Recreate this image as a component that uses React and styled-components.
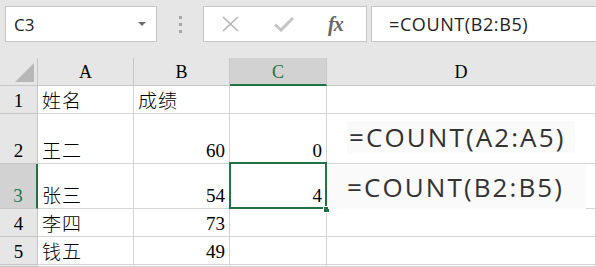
import { Fragment } from 'react';
import styled, { createGlobalStyle } from 'styled-components';

const GREEN = '#217346';

const Global = createGlobalStyle`
    html, body {
        margin: 0;
        padding: 0;
        background: #e6e6e6;
        overflow: hidden;
    }
    * {
        box-sizing: border-box;
    }
`;

const Page = styled.div`
    width: 596px;
    height: 267px;
    background: #e6e6e6;
    display: flex;
    flex-direction: column;
`;

const Toolbar = styled.div`
    height: 58px;
    display: flex;
    align-items: flex-start;
    padding: 6px 0 0 5px;
`;

const Box = styled.div`
    height: 36px;
    background: #fff;
    border: 1px solid #c6c6c6;
    display: flex;
    align-items: center;
`;

const NameBox = styled(Box)`
    width: 152px;
    padding: 0 0 0 8px;
    font-family: "Open Sans", "Liberation Sans", sans-serif;
    font-size: 17px;
    color: #222;
    justify-content: space-between;
`;

const DropArrow = styled.span`
    width: 0;
    height: 0;
    margin-right: 10px;
    border-left: 4px solid transparent;
    border-right: 4px solid transparent;
    border-top: 4px solid #6f6f6f;
`;

const Grip = styled.div`
    width: 46px;
    height: 36px;
    display: flex;
    flex-direction: column;
    align-items: center;
    justify-content: center;
    gap: 4px;
`;

const Dot = styled.span`
    width: 3px;
    height: 3px;
    background: #a6a6a6;
`;

const ButtonPanel = styled(Box)`
    width: 164px;
    padding-left: 18px;
    gap: 35px;
`;

const Fx = styled.span`
    font-family: "Liberation Serif", serif;
    font-style: italic;
    font-weight: bold;
    font-size: 20px;
    color: #666;
    margin-left: -1px;
    letter-spacing: -1px;
`;

const FormulaInput = styled(Box)`
    flex: 1;
    margin-left: 4px;
    border-right: none;
    padding-left: 17px;
    font-family: "Open Sans", "Liberation Sans", sans-serif;
    font-size: 18px;
    letter-spacing: 0.6px;
    color: #222;
`;

const Sheet = styled.div`
    position: relative;
    flex: 1;
    display: grid;
    grid-template-columns: 38px 96px 96px 97px 1fr;
    grid-template-rows: 28px 28px 50px 45px 28px 28px 1fr;
    overflow: hidden;
`;

const Corner = styled.div`
    border-right: 1px solid #c6c6c6;
    border-bottom: 1px solid #c6c6c6;
    display: flex;
    align-items: flex-end;
    justify-content: flex-end;
    padding: 0 3px 3px 0;
`;

const Triangle = styled.span`
    width: 0;
    height: 0;
    border-left: 19px solid transparent;
    border-bottom: 19px solid #b7b7b7;
`;

const ColHead = styled.div`
    background: ${p => p.selected ? '#d2d2d2' : '#e6e6e6'};
    color: ${p => p.selected ? GREEN : '#000'};
    border-right: 1px solid ${p => p.last ? 'transparent' : '#c6c6c6'};
    border-bottom: ${p => p.selected ? `2px solid ${GREEN}` : '1px solid #c6c6c6'};
    font-family: "Liberation Serif", serif;
    font-size: 18px;
    display: flex;
    justify-content: center;
    align-items: flex-end;
    padding-bottom: ${p => p.selected ? '1px' : '2px'};
`;

const RowHead = styled.div`
    background: ${p => p.selected ? '#d2d2d2' : '#e6e6e6'};
    color: ${p => p.selected ? GREEN : '#000'};
    border-right: ${p => p.selected ? `2px solid ${GREEN}` : '1px solid #c6c6c6'};
    border-bottom: 1px solid #c6c6c6;
    font-family: "Liberation Serif", serif;
    font-size: 19px;
    display: flex;
    justify-content: center;
    align-items: flex-end;
    padding-bottom: 1px;
`;

const Cell = styled.div`
    position: relative;
    background: #fff;
    border-right: 1px solid #d4d4d4;
    border-bottom: 1px solid #d4d4d4;
    display: flex;
    align-items: flex-end;
    justify-content: ${p => p.num ? 'flex-end' : 'flex-start'};
    padding: ${p => p.num ? '0 4px 0 0' : '0 0 0 4px'};
    font-family: "Liberation Serif", "Noto Sans CJK SC", serif;
    font-size: 19px;
    line-height: 24px;
    color: #000;

    ${p => p.active && `
        &::after {
            content: '';
            position: absolute;
            top: -2px;
            left: -1px;
            right: -1px;
            bottom: -1px;
            border: 2px solid ${GREEN};
        }
    `}
`;

const Han = styled.span`
    font-family: "Noto Sans CJK SC", sans-serif;
    font-weight: 300;
    font-size: 19px;
    letter-spacing: 1px;
    line-height: 26px;
`;

const FillHandle = styled.span`
    position: absolute;
    right: -4px;
    bottom: -5px;
    width: 7px;
    height: 7px;
    background: ${GREEN};
    border: 1px solid #fff;
    z-index: 2;
`;

const Snippet = styled.div`
    position: absolute;
    left: ${p => p.x}px;
    top: ${p => p.y}px;
    width: ${p => p.w}px;
    height: ${p => p.h}px;
    background: #fafafa;
    display: flex;
    align-items: center;
    padding-left: ${p => p.pad}px;
    font-family: "Open Sans", "Liberation Sans", sans-serif;
    font-size: 26px;
    letter-spacing: 2.1px;
    color: #333;
    z-index: 3;
`;

const cols = ['A', 'B', 'C', 'D'];
const rows = [
    { n: 1, name: '姓名', score: '成绩', c: '' },
    { n: 2, name: '王二', score: 60, c: 0 },
    { n: 3, name: '张三', score: 54, c: 4 },
    { n: 4, name: '李四', score: 73, c: '' },
    { n: 5, name: '钱五', score: 49, c: '' },
    { n: 6, name: '', score: '', c: '' },
];

const XIcon = () => (
    <svg width="17" height="16" viewBox="0 0 17 16">
        <path d="M1 1 L16 15 M16 1 L1 15" stroke="#b4b4b4" strokeWidth="1.6" fill="none" />
    </svg>
);

const CheckIcon = () => (
    <svg width="20" height="16" viewBox="0 0 20 16">
        <path d="M1 8.5 L7 14 L19 2" stroke="#c4c4c4" strokeWidth="3" fill="none" />
    </svg>
);

const App = () => {
    return (
        <Page>
            <Global />
            <Toolbar>
                <NameBox>C3<DropArrow /></NameBox>
                <Grip><Dot /><Dot /><Dot /></Grip>
                <ButtonPanel>
                    <XIcon />
                    <CheckIcon />
                    <Fx>fx</Fx>
                </ButtonPanel>
                <FormulaInput>=COUNT(B2:B5)</FormulaInput>
            </Toolbar>
            <Sheet>
                <Corner><Triangle /></Corner>
                {cols.map((c, i) => (
                    <ColHead key={c} selected={c === 'C'} last={i === cols.length - 1}>{c}</ColHead>
                ))}
                {rows.map(r => (
                    <Fragment key={r.n}>
                        <RowHead selected={r.n === 3}>{r.n < 6 ? r.n : ''}</RowHead>
                        <Cell><Han>{r.name}</Han></Cell>
                        <Cell num={typeof r.score === 'number'}>
                            {typeof r.score === 'number' ? r.score : <Han>{r.score}</Han>}
                        </Cell>
                        <Cell num active={r.n === 3}>
                            {r.c}
                            {r.n === 3 && <FillHandle />}
                        </Cell>
                        <Cell />
                    </Fragment>
                ))}
                <Snippet x={347} y={63} w={228} h={32} pad={2}>=COUNT(A2:A5)</Snippet>
                <Snippet x={328} y={107} w={258} h={44} pad={19}>=COUNT(B2:B5)</Snippet>
            </Sheet>
        </Page>
    );
};

export default App;
